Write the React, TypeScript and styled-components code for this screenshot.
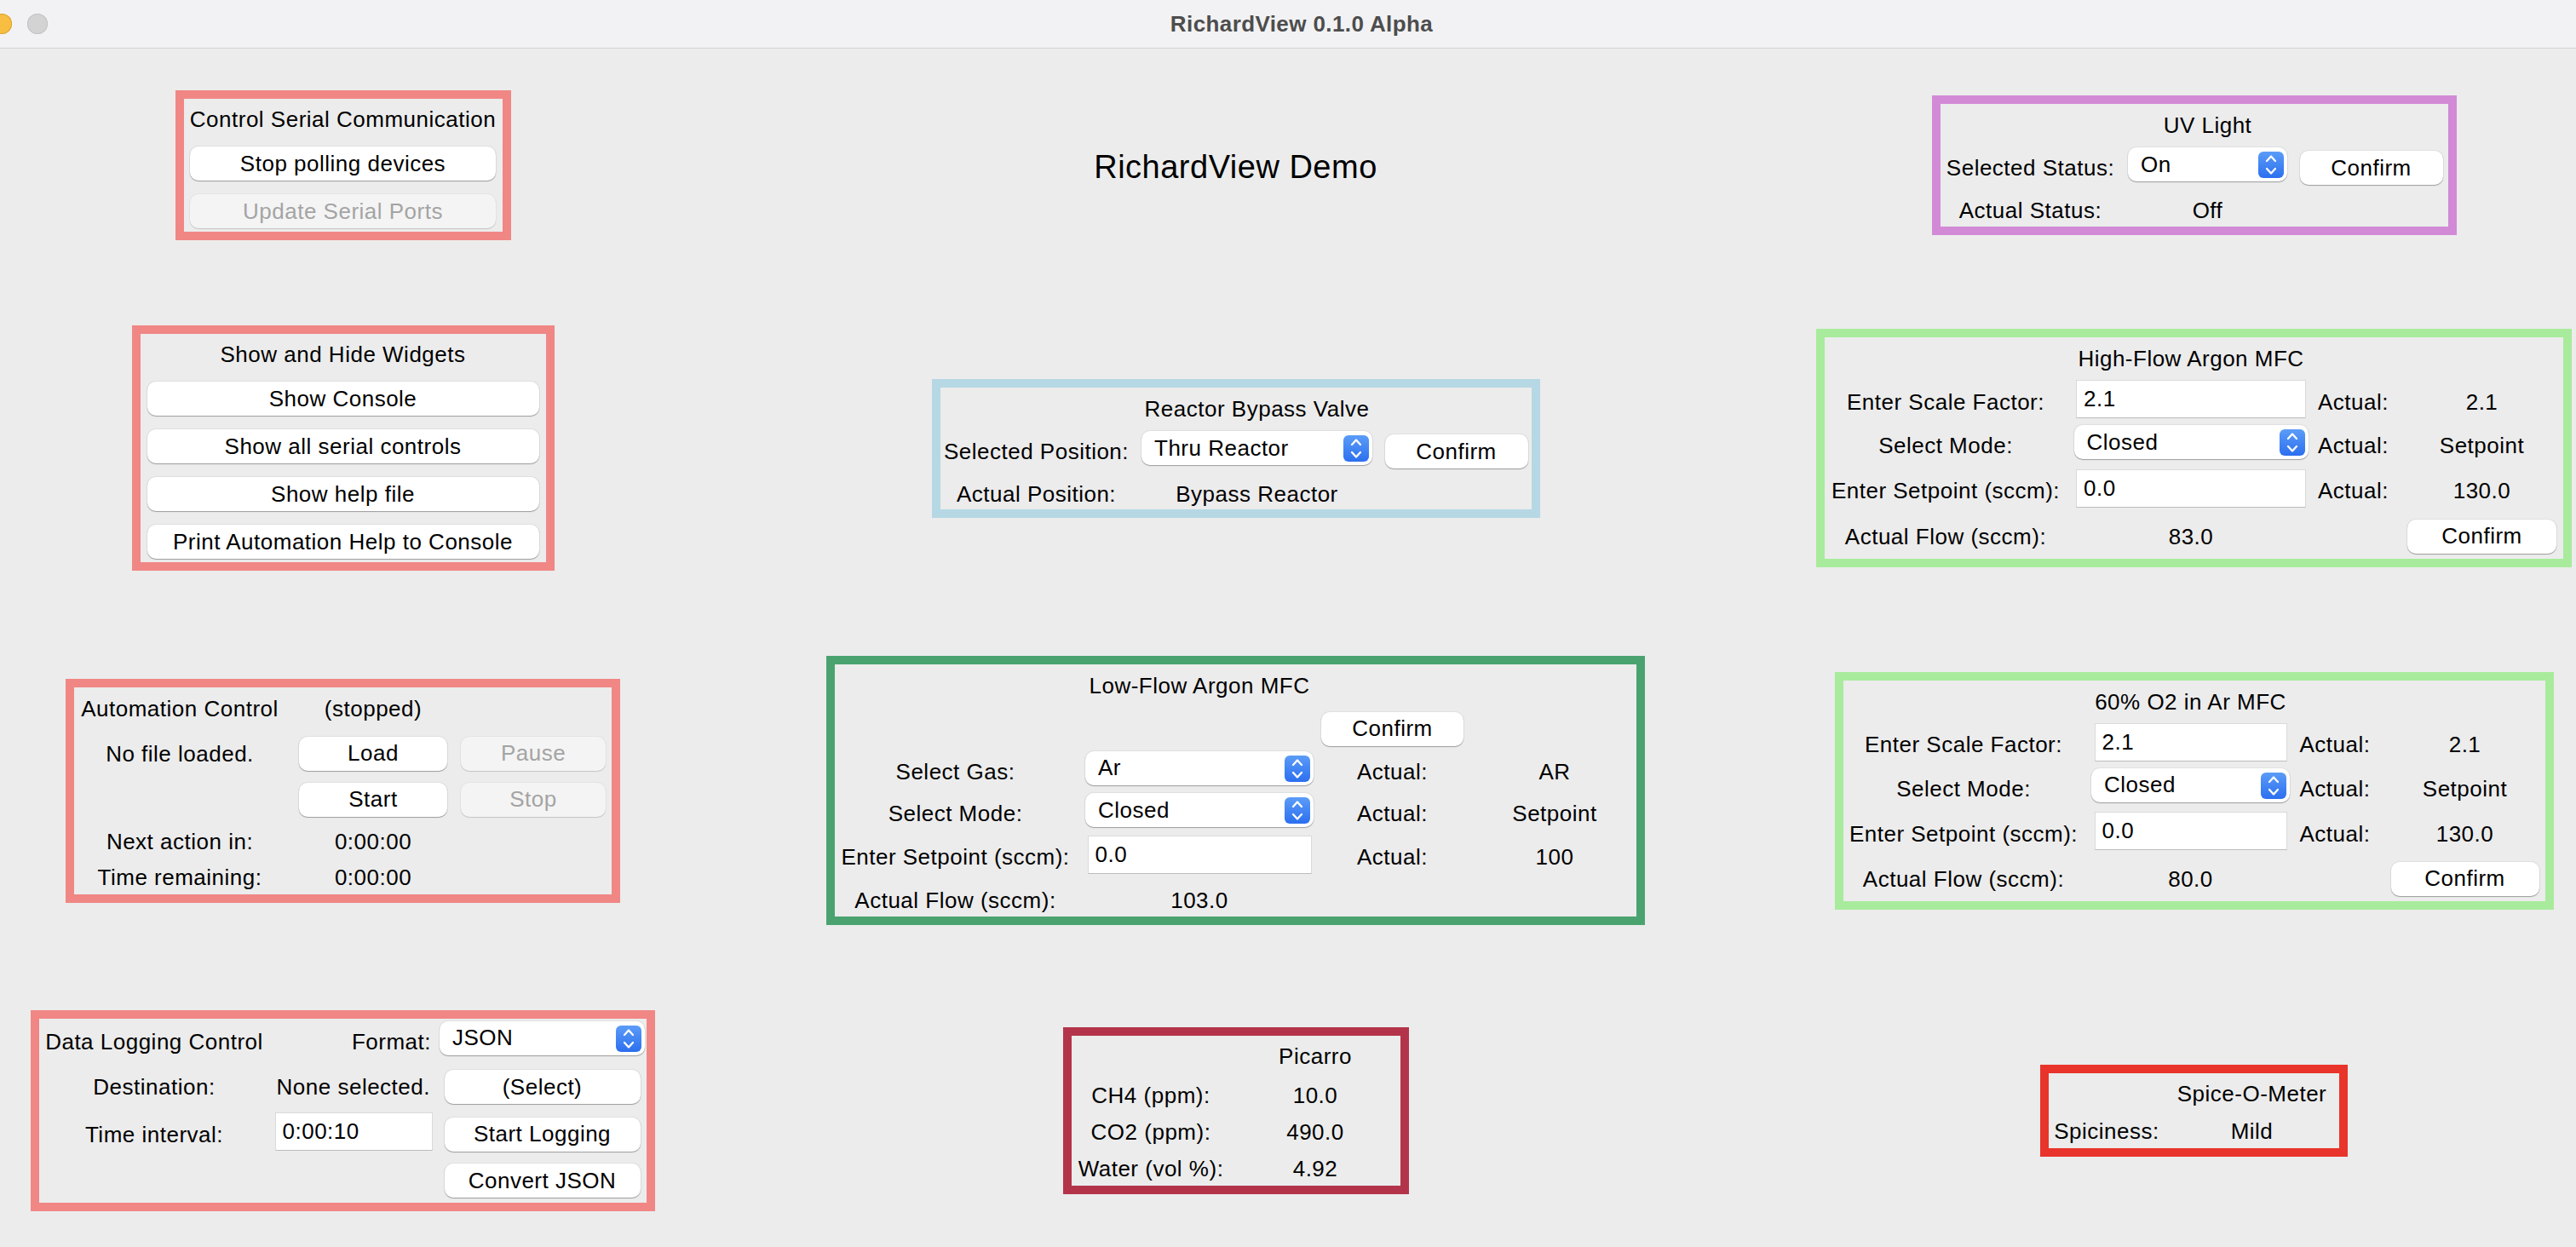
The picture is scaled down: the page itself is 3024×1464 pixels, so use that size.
import styled, { createGlobalStyle, css } from "styled-components";

const GlobalStyle = createGlobalStyle`
  html, body {
    margin: 0;
    padding: 0;
    overflow: hidden;
  }
  body {
    background: #ececec;
    color: #000;
    font-family: "Liberation Sans", Arial, sans-serif;
    font-size: 26px;
    letter-spacing: 0.5px;
  }
`;

const tone = {
  coral: "#f08784",
  orchid: "#d28ad6",
  sky: "#b5d8e4",
  mint: "#a8eb9c",
  forest: "#4aa36f",
  crimson: "#b3344a",
  red: "#e8342a",
};

type Cell = {
  $r?: number;
  $c?: number;
  $align?: "start" | "center" | "end";
  $ml?: number;
  $mr?: number;
  $mt?: number;
};

const cell = css<Cell>`
  grid-row: ${(p) => p.$r ?? "auto"};
  grid-column: ${(p) => p.$c ?? "auto"};
  justify-self: ${(p) => p.$align ?? "center"};
  margin-left: ${(p) => p.$ml ?? 0}px;
  margin-right: ${(p) => p.$mr ?? 0}px;
  margin-top: ${(p) => p.$mt ?? 0}px;
`;

const Window = styled.div`
  width: 3024px;
  height: 1464px;
  overflow: hidden;
  background: #ececec;
  display: flex;
  flex-direction: column;
`;

const TitleBar = styled.header`
  flex: none;
  height: 56px;
  background: #f2f2f4;
  border-bottom: 1px solid #d2d2d2;
  display: grid;
  grid-template-columns: 88px 1fr 56px;
  align-items: center;
`;

const Lights = styled.div`
  display: flex;
  gap: 18px;
  margin-left: -10px;
`;

const Light = styled.span<{ $fill: string; $edge: string }>`
  width: 24px;
  height: 24px;
  border-radius: 50%;
  background: ${(p) => p.$fill};
  box-shadow: inset 0 0 0 1px ${(p) => p.$edge};
`;

const WindowTitle = styled.div`
  text-align: center;
  font-weight: 700;
  color: #4d4d4d;
  letter-spacing: 0.4px;
`;

const Board = styled.main`
  flex: none;
  display: grid;
  grid-template-columns: 805px 1291px 959px;
  grid-template-rows: 274px 390px 414px 338px;
  place-items: center;
`;

const DemoTitle = styled.h1`
  margin: 4px 0 0;
  font-size: 38px;
  font-weight: 400;
  line-height: 44px;
`;

const Panel = styled.section<{ $tone: string }>`
  border: 10px solid ${(p) => p.$tone};
`;

const Cells = styled.div<{ $cols: string; $rows: string; $padRight?: number }>`
  display: grid;
  grid-template-columns: ${(p) => p.$cols};
  grid-template-rows: ${(p) => p.$rows};
  align-items: center;
  padding-right: ${(p) => p.$padRight ?? 0}px;
`;

const Stack = styled.div<{ $w: number }>`
  width: ${(p) => p.$w}px;
  box-sizing: border-box;
  padding: 0 8px 4px;
  display: flex;
  flex-direction: column;
  align-items: center;
  gap: 16px;
`;

const Heading = styled.div`
  padding-top: 8px;
  line-height: 32px;
  white-space: nowrap;
`;

const Text = styled.span<Cell>`
  ${cell}
  line-height: 32px;
  white-space: nowrap;
`;

const Button = styled.button<Cell & { $w: number }>`
  ${cell}
  width: ${(p) => p.$w}px;
  height: 40px;
  padding: 0;
  border: none;
  border-radius: 10px;
  background: #fff;
  box-shadow: 0 1px 1px rgba(0, 0, 0, 0.3), 0 0 0 1px rgba(0, 0, 0, 0.05);
  font: inherit;
  letter-spacing: inherit;
  color: #000;
  white-space: nowrap;

  &:disabled {
    background: #f4f4f4;
    color: #a4a4a4;
    box-shadow: 0 1px 1px rgba(0, 0, 0, 0.14), 0 0 0 1px rgba(0, 0, 0, 0.03);
  }
`;

const Select = styled.div<Cell & { $w: number }>`
  ${cell}
  width: ${(p) => p.$w}px;
  height: 40px;
  margin-bottom: 8px;
  box-sizing: border-box;
  padding: 0 4px 0 15px;
  border-radius: 10px;
  background: #fff;
  box-shadow: 0 1px 1px rgba(0, 0, 0, 0.3), 0 0 0 1px rgba(0, 0, 0, 0.05);
  display: flex;
  align-items: center;
  justify-content: space-between;
  white-space: nowrap;
`;

const Stepper = styled.span`
  width: 30px;
  height: 31px;
  margin-top: 1px;
  border-radius: 6px;
  background: linear-gradient(#5b9cf8, #2c6fef);
  display: flex;
`;

const Entry = styled.input<Cell & { $w: number }>`
  ${cell}
  width: ${(p) => p.$w}px;
  height: 45px;
  margin-bottom: 6px;
  box-sizing: border-box;
  padding: 0 8px;
  border: 1px solid #dadada;
  border-bottom-color: #bcbcbc;
  border-radius: 0;
  background: #fff;
  font: inherit;
  letter-spacing: inherit;
  color: #000;
  outline: none;
`;

function Dropdown({ value, ...rest }: Cell & { $w: number; value: string }) {
  return (
    <Select {...rest}>
      <span>{value}</span>
      <Stepper>
        <svg width="30" height="31" viewBox="0 0 30 31">
          <path
            d="M10 11 15 5.5 20 11M10 20 15 25.5 20 20"
            fill="none"
            stroke="#fff"
            strokeWidth="2.3"
            strokeLinecap="round"
            strokeLinejoin="round"
          />
        </svg>
      </Stepper>
    </Select>
  );
}

function Field({ value, ...rest }: Cell & { $w: number; value: string }) {
  return <Entry {...rest} value={value} readOnly />;
}

const SerialControl = () => (
  <Panel $tone={tone.coral}>
    <Stack $w={374}>
      <Heading>Control Serial Communication</Heading>
      <Button $w={359}>Stop polling devices</Button>
      <Button $w={359} disabled>Update Serial Ports</Button>
    </Stack>
  </Panel>
);

const UvLight = () => (
  <Panel $tone={tone.orchid}>
    <Cells $cols="212px 204px 180px" $rows="50px 50px 44px">
      <Text $r={1} $c={2}>UV Light</Text>
      <Text $r={2} $c={1}>Selected Status:</Text>
      <Dropdown $r={2} $c={2} $w={187} value="On" />
      <Button $r={2} $c={3} $w={168}>Confirm</Button>
      <Text $r={3} $c={1} $mt={6}>Actual Status:</Text>
      <Text $r={3} $c={2} $mt={6}>Off</Text>
    </Cells>
  </Panel>
);

const WidgetToggles = () => (
  <Panel $tone={tone.coral}>
    <Stack $w={476}>
      <Heading>Show and Hide Widgets</Heading>
      <Button $w={460}>Show Console</Button>
      <Button $w={460}>Show all serial controls</Button>
      <Button $w={460}>Show help file</Button>
      <Button $w={460}>Print Automation Help to Console</Button>
    </Stack>
  </Panel>
);

const BypassValve = () => (
  <Panel $tone={tone.sky}>
    <Cells $cols="226px 292px 176px" $rows="51px 49px 43px">
      <Text $r={1} $c={2}>Reactor Bypass Valve</Text>
      <Text $r={2} $c={1}>Selected Position:</Text>
      <Dropdown $r={2} $c={2} $w={271} value="Thru Reactor" />
      <Button $r={2} $c={3} $w={168}>Confirm</Button>
      <Text $r={3} $c={1} $mt={7}>Actual Position:</Text>
      <Text $r={3} $c={2} $mt={7}>Bypass Reactor</Text>
    </Cells>
  </Panel>
);

type MfcProps = {
  title: string;
  cols: string;
  rows: string;
  padRight: number;
  entryW: number;
  selectW: number;
  confirmW: number;
  flow: string;
};

const ScaledMfc = ({ title, cols, rows, padRight, entryW, selectW, confirmW, flow }: MfcProps) => (
  <Panel $tone={tone.mint}>
    <Cells $cols={cols} $rows={rows} $padRight={padRight}>
      <Text $r={1} $c={2}>{title}</Text>

      <Text $r={2} $c={1}>Enter Scale Factor:</Text>
      <Field $r={2} $c={2} $w={entryW} value="2.1" />
      <Text $r={2} $c={3} $align="start" $ml={3}>Actual:</Text>
      <Text $r={2} $c={4}>2.1</Text>

      <Text $r={3} $c={1}>Select Mode:</Text>
      <Dropdown $r={3} $c={2} $w={selectW} value="Closed" />
      <Text $r={3} $c={3} $align="start" $ml={3}>Actual:</Text>
      <Text $r={3} $c={4}>Setpoint</Text>

      <Text $r={4} $c={1}>Enter Setpoint (sccm):</Text>
      <Field $r={4} $c={2} $w={entryW} value="0.0" />
      <Text $r={4} $c={3} $align="start" $ml={3}>Actual:</Text>
      <Text $r={4} $c={4}>130.0</Text>

      <Text $r={5} $c={1}>Actual Flow (sccm):</Text>
      <Text $r={5} $c={2}>{flow}</Text>
      <Button $r={5} $c={4} $w={confirmW}>Confirm</Button>
    </Cells>
  </Panel>
);

const Automation = () => (
  <Panel $tone={tone.coral}>
    <Cells $cols="248px 206px 170px" $rows="51px 54px 54px 45px 39px" $padRight={7}>
      <Text $r={1} $c={1}>Automation Control</Text>
      <Text $r={1} $c={2}>(stopped)</Text>

      <Text $r={2} $c={1}>No file loaded.</Text>
      <Button $r={2} $c={2} $w={174}>Load</Button>
      <Button $r={2} $c={3} $w={170} disabled>Pause</Button>

      <Button $r={3} $c={2} $w={174}>Start</Button>
      <Button $r={3} $c={3} $w={170} disabled>Stop</Button>

      <Text $r={4} $c={1}>Next action in:</Text>
      <Text $r={4} $c={2}>0:00:00</Text>

      <Text $r={5} $c={1}>Time remaining:</Text>
      <Text $r={5} $c={2}>0:00:00</Text>
    </Cells>
  </Panel>
);

const LowFlowMfc = () => (
  <Panel $tone={tone.forest}>
    <Cells $cols="283px 290px 163px 205px" $rows="50px 51px 49px 50px 52px 44px">
      <Text $r={1} $c={2}>Low-Flow Argon MFC</Text>
      <Button $r={2} $c={3} $w={167}>Confirm</Button>

      <Text $r={3} $c={1}>Select Gas:</Text>
      <Dropdown $r={3} $c={2} $w={268} value="Ar" />
      <Text $r={3} $c={3}>Actual:</Text>
      <Text $r={3} $c={4} $ml={13}>AR</Text>

      <Text $r={4} $c={1}>Select Mode:</Text>
      <Dropdown $r={4} $c={2} $w={268} value="Closed" />
      <Text $r={4} $c={3}>Actual:</Text>
      <Text $r={4} $c={4} $ml={13}>Setpoint</Text>

      <Text $r={5} $c={1}>Enter Setpoint (sccm):</Text>
      <Field $r={5} $c={2} $w={263} value="0.0" />
      <Text $r={5} $c={3}>Actual:</Text>
      <Text $r={5} $c={4} $ml={13}>100</Text>

      <Text $r={6} $c={1} $mt={6}>Actual Flow (sccm):</Text>
      <Text $r={6} $c={2} $mt={6}>103.0</Text>
    </Cells>
  </Panel>
);

const DataLogging = () => (
  <Panel $tone={tone.coral}>
    <Cells $cols="270px 198px 245px" $rows="53px 54px 57px 52px">
      <Text $r={1} $c={1}>Data Logging Control</Text>
      <Text $r={1} $c={2} $align="end" $mr={8}>Format:</Text>
      <Dropdown $r={1} $c={3} $w={241} value="JSON" />

      <Text $r={2} $c={1}>Destination:</Text>
      <Text $r={2} $c={2} $align="end" $mr={9}>None selected.</Text>
      <Button $r={2} $c={3} $w={230}>(Select)</Button>

      <Text $r={3} $c={1}>Time interval:</Text>
      <Field $r={3} $c={2} $w={185} value="0:00:10" />
      <Button $r={3} $c={3} $w={230}>Start Logging</Button>

      <Button $r={4} $c={3} $w={230}>Convert JSON</Button>
    </Cells>
  </Panel>
);

const readings = [
  ["CH4 (ppm):", "10.0"],
  ["CO2 (ppm):", "490.0"],
  ["Water (vol %):", "4.92"],
];

const Picarro = () => (
  <Panel $tone={tone.crimson}>
    <Cells $cols="187px 199px" $rows="48px 43px 44px 41px">
      <Text $r={1} $c={2}>Picarro</Text>
      {readings.map(([label, value], i) => [
        <Text key={label} $r={i + 2} $c={1}>{label}</Text>,
        <Text key={label + "v"} $r={i + 2} $c={2}>{value}</Text>,
      ])}
    </Cells>
  </Panel>
);

const SpiceMeter = () => (
  <Panel $tone={tone.red}>
    <Cells $cols="136px 205px" $rows="47px 41px">
      <Text $r={1} $c={2}>Spice-O-Meter</Text>
      <Text $r={2} $c={1}>Spiciness:</Text>
      <Text $r={2} $c={2}>Mild</Text>
    </Cells>
  </Panel>
);

export default function App() {
  return (
    <>
      <GlobalStyle />
      <Window>
        <TitleBar>
          <Lights>
            <Light $fill="#f8be41" $edge="#dfa12f" />
            <Light $fill="#d3d3d3" $edge="#c2c2c2" />
          </Lights>
          <WindowTitle>RichardView 0.1.0 Alpha</WindowTitle>
          <span />
        </TitleBar>

        <Board>
          <SerialControl />
          <DemoTitle>RichardView Demo</DemoTitle>
          <UvLight />

          <WidgetToggles />
          <BypassValve />
          <ScaledMfc
            title="High-Flow Argon MFC"
            cols="284px 292px 108px 175px"
            rows="50px 51px 52px 54px 53px"
            padRight={8}
            entryW={270}
            selectW={275}
            confirmW={175}
            flow="83.0"
          />

          <Automation />
          <LowFlowMfc />
          <ScaledMfc
            title="60% O2 in Ar MFC"
            cols="283px 250px 110px 174px"
            rows="50px 51px 52px 54px 52px"
            padRight={7}
            entryW={226}
            selectW={233}
            confirmW={174}
            flow="80.0"
          />

          <DataLogging />
          <Picarro />
          <SpiceMeter />
        </Board>
      </Window>
    </>
  );
}
